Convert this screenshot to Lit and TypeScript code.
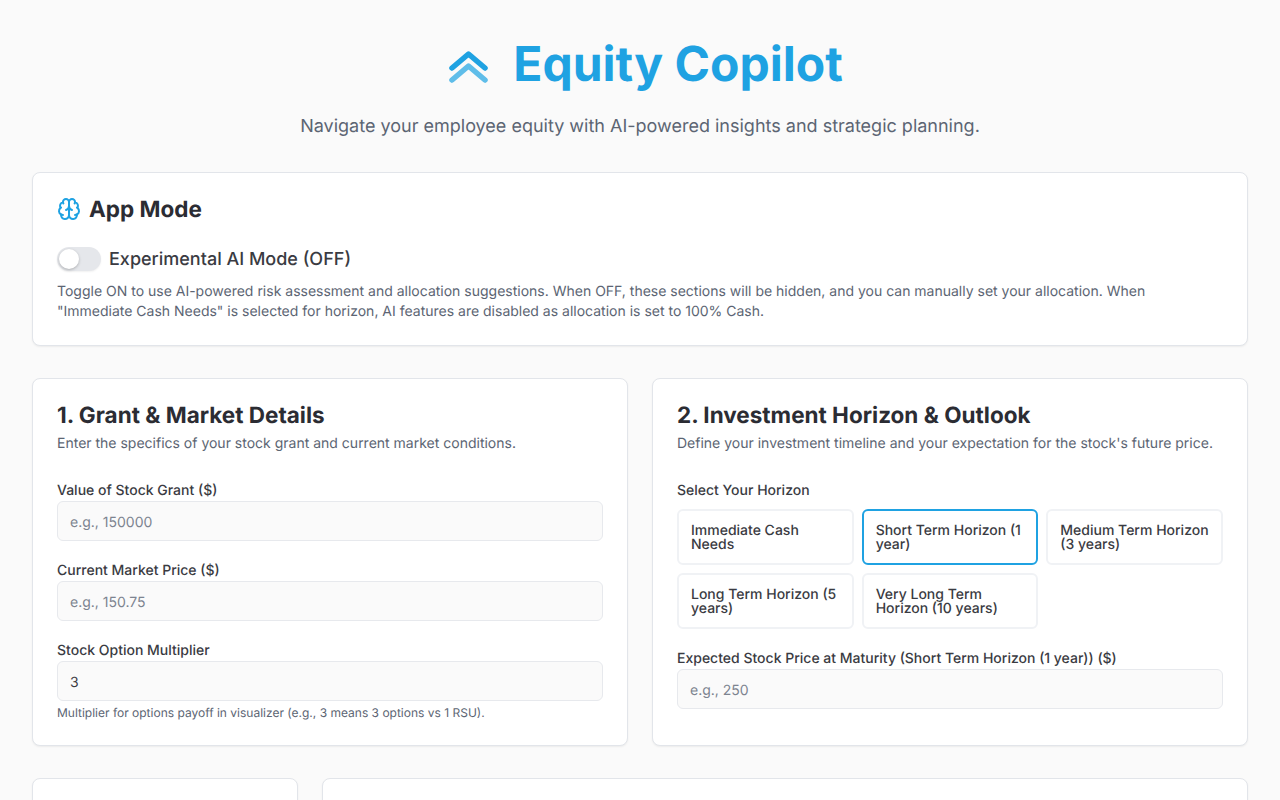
import { LitElement, html, css } from "lit";
import { customElement } from "lit/decorators.js";

const horizons = [
  ["Immediate Cash Needs", false],
  ["Short Term Horizon (1 year)", true],
  ["Medium Term Horizon (3 years)", false],
  ["Long Term Horizon (5 years)", false],
  ["Very Long Term Horizon (10 years)", false],
] as const;

@customElement("app-root")
export class AppRoot extends LitElement {
  static styles = css`
    :host { display: block; background: #fafafa; color: #27272a; font-family: Inter, "Liberation Sans", sans-serif; min-height: 800px; text-rendering: geometricPrecision; }
    * { box-sizing: border-box; }
    .page { padding: 32px 32px 32px; display: flex; flex-direction: column; }
    header { display: flex; flex-direction: column; align-items: center; margin-bottom: 31px; }
    .brand { display: flex; align-items: center; gap: 24px; height: 64px; margin-left: 12px; }
    .logo { width: 40px; height: 40px; display: block; }
    h1 { margin: 0; font-size: 48px; line-height: 64px; font-weight: 700; color: #1fa2e2; letter-spacing: 0; }
    .tagline { margin: 17px 0 0; font-size: 18px; line-height: 28px; color: #5c6573; }
    .card { background: #fff; border: 1px solid #e2e5ea; border-radius: 8px; box-shadow: 0 1px 2px rgba(0,0,0,.06); padding: 24px; }
    .mode { margin-bottom: 32px; height: 174px; }
    .mode-title { display: flex; align-items: center; gap: 8px; height: 26px; }
    h2 { margin: 0; font-size: 22.5px; line-height: 32px; font-weight: 700; color: #2b2c33; }
    .brain { width: 24px; height: 24px; display: block; margin-top: -2px; }
    .toggle-row { display: flex; align-items: center; gap: 8px; margin-top: 24px; height: 24px; }
    .switch { width: 44px; height: 24px; border-radius: 12px; background: #e5e7eb; padding: 2px; box-shadow: 0 1px 2px rgba(0,0,0,.06); }
    .knob { width: 20px; height: 20px; border-radius: 50%; background: #fff; box-shadow: 0 1px 3px rgba(0,0,0,.25); }
    .toggle-label { font-size: 18px; line-height: 24px; font-weight: 500; color: #3a3b42; padding-top: 2px; }
    .hint { margin: 11px 0 0; font-size: 14px; line-height: 20px; color: #5c6573; }
    .two { display: grid; grid-template-columns: 1fr 1fr; gap: 24px; margin-bottom: 32px; }
    .two .card { height: 368px; }
    .sub { margin: 5px 0 0; font-size: 14px; line-height: 20px; color: #5c6573; }
    .sec-title { height: 26px; display: flex; align-items: center; }
    .fields { margin-top: 27px; display: flex; flex-direction: column; gap: 20px; }
    label, .lab { display: block; font-size: 14px; line-height: 20px; font-weight: 500; color: #3a3b42; }
    .input { height: 40px; border: 1px solid #e7e9ed; border-radius: 6px; background: #fafafa; padding: 2px 12px 0; display: flex; align-items: center; font-size: 14px; color: #3a3b42; }
    .input.ph { color: #7d8490; }
    .small { margin: 4px 0 0; font-size: 12px; line-height: 16px; color: #5c6573; }
    .grid { display: grid; grid-template-columns: repeat(3, 1fr); gap: 8px; margin-top: 8px; }
    .opt { height: 56px; padding: 2px 12px 0; border: 2px solid #f0f2f5; border-radius: 6px; background: #fff; font-size: 14px; line-height: 14px; font-weight: 500; color: #3a3b42; display: flex; align-items: center; }
    .opt.on { border-color: #1fa2e2; }
    .three { display: grid; grid-template-columns: 266px 1fr; gap: 24px; }
    .three .card { height: 120px; }
  `;

  field(label: string, value: string, ph = true) {
    return html`<div><label>${label}</label><div class="input ${ph ? "ph" : ""}">${value}</div></div>`;
  }

  render() {
    return html`<div class="page">
      <header>
        <div class="brand">
          <svg class="logo" viewBox="0 0 40 40" fill="none" stroke-linecap="round" stroke-linejoin="round" stroke-width="5.5">
            <path d="M3 36 L19.5 22 L36 36" stroke="#5fbde9"></path>
            <path d="M3 24 L19.5 10 L36 24" stroke="#1fa2e2"></path>
          </svg>
          <h1>Equity Copilot</h1>
        </div>
        <p class="tagline">Navigate your employee equity with AI-powered insights and strategic planning.</p>
      </header>

      <section class="card mode">
        <div class="mode-title">
          <svg class="brain" viewBox="0 0 24 24" fill="none" stroke="#1fa2e2" stroke-width="2" stroke-linecap="round" stroke-linejoin="round">
            <path d="M12 5a3 3 0 1 0-5.997.125 4 4 0 0 0-2.526 5.77 4 4 0 0 0 .556 6.588A4 4 0 1 0 12 18Z"></path>
            <path d="M12 5a3 3 0 1 1 5.997.125 4 4 0 0 1 2.526 5.77 4 4 0 0 1-.556 6.588A4 4 0 1 1 12 18Z"></path>
            <path d="M15 13a4.5 4.5 0 0 1-3-4 4.5 4.5 0 0 1-3 4"></path>
            <path d="M17.599 6.5a3 3 0 0 0 .399-1.375"></path>
            <path d="M6.003 5.125A3 3 0 0 0 6.401 6.5"></path>
            <path d="M3.477 10.896a4 4 0 0 1 .585-.396"></path>
            <path d="M19.938 10.5a4 4 0 0 1 .585.396"></path>
            <path d="M6 18a4 4 0 0 1-1.967-.516"></path>
            <path d="M19.967 17.484A4 4 0 0 1 18 18"></path>
          </svg>
          <h2>App Mode</h2>
        </div>
        <div class="toggle-row">
          <div class="switch"><div class="knob"></div></div>
          <span class="toggle-label">Experimental AI Mode (OFF)</span>
        </div>
        <p class="hint">Toggle ON to use AI-powered risk assessment and allocation suggestions. When OFF, these sections will be hidden, and you can manually set your allocation. When "Immediate Cash Needs" is selected for horizon, AI features are disabled as allocation is set to 100% Cash.</p>
      </section>

      <div class="two">
        <section class="card">
          <div class="sec-title"><h2>1. Grant &amp; Market Details</h2></div>
          <p class="sub">Enter the specifics of your stock grant and current market conditions.</p>
          <div class="fields">
            ${this.field("Value of Stock Grant ($)", "e.g., 150000")}
            ${this.field("Current Market Price ($)", "e.g., 150.75")}
            <div>
              <label>Stock Option Multiplier</label>
              <div class="input">3</div>
              <p class="small">Multiplier for options payoff in visualizer (e.g., 3 means 3 options vs 1 RSU).</p>
            </div>
          </div>
        </section>
        <section class="card">
          <div class="sec-title"><h2>2. Investment Horizon &amp; Outlook</h2></div>
          <p class="sub">Define your investment timeline and your expectation for the stock's future price.</p>
          <div class="fields">
            <div>
              <div class="lab">Select Your Horizon</div>
              <div class="grid">
                ${horizons.map(([t, on]) => html`<div class="opt ${on ? "on" : ""}"><span>${t}</span></div>`)}
              </div>
            </div>
            ${this.field("Expected Stock Price at Maturity (Short Term Horizon (1 year)) ($)", "e.g., 250")}
          </div>
        </section>
      </div>

      <div class="three">
        <section class="card"></section>
        <section class="card"></section>
      </div>
    </div>`;
  }
}
